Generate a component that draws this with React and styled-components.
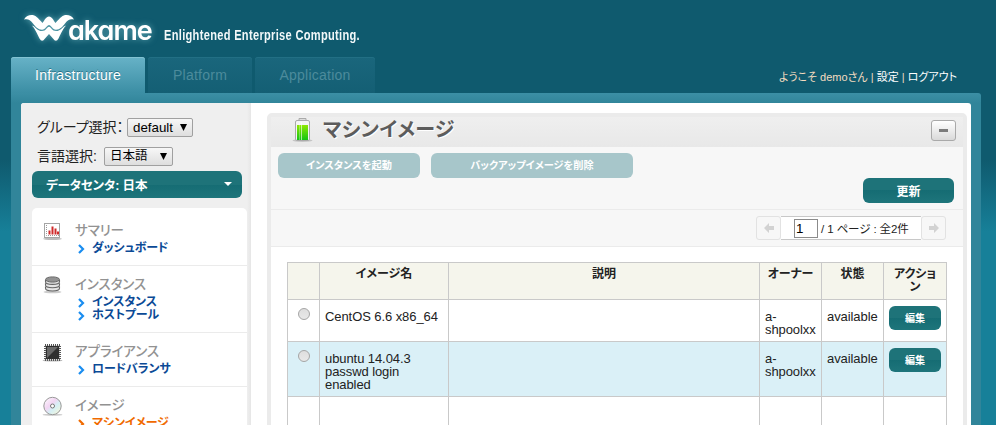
import React from 'react';
import styled, { createGlobalStyle, css } from 'styled-components';

const GlobalStyle = createGlobalStyle`
  * { box-sizing: border-box; }
  html, body { margin: 0; height: 425px; overflow: hidden; }
  body {
    font-family: "Liberation Sans", "Noto Sans CJK JP", sans-serif;
    font-feature-settings: "palt";
    font-size: 13px;
    color: #222;
    background: linear-gradient(#0f5a6e 0, #0f5a6e 160px, #178099 232px, #178099 100%);
  }
`;

const Page = styled.div`
  width: 996px;
  height: 425px;
  overflow: hidden;
  padding: 0 15px 0 11px;
`;

const Header = styled.header`
  height: 57px;
  display: flex;
  padding: 12px 0 0 12px;
`;

const Logo = styled.div`
  display: flex;
  width: 141px;
  color: #fff;
  filter: drop-shadow(0 0 3px rgba(160, 225, 235, 0.55));
`;

const LogoMark = styled.svg`
  width: 52px;
  height: 32px;
  margin-right: -7px;
  flex: none;
`;

const LogoText = styled.span`
  font: 600 27px/32px Inter, sans-serif;
  font-feature-settings: "cv11";
  letter-spacing: -1px;
  padding-top: 3px;
`;

const Tagline = styled.span`
  font-size: 14px;
  font-weight: bold;
  line-height: 16px;
  padding-top: 15px;
  color: #f2f8f9;
  white-space: nowrap;
  letter-spacing: 0.4px;
  transform: scaleX(0.79);
  transform-origin: 0 0;
`;

const NavBar = styled.nav`
  height: 36px;
  display: flex;
  gap: 3px;
`;

const Tab = styled.div`
  width: ${p => p.$width}px;
  border-radius: 3px 3px 0 0;
  font-size: 14px;
  letter-spacing: 0.25px;
  line-height: 37px;
  text-align: center;
  ${p => p.$active ? css`
    color: #fff;
    background: linear-gradient(#67b2c7, #3b8ea4);
    box-shadow: inset 0 1px #82c2d2;
    text-shadow: 0 -1px rgba(10, 80, 100, 0.6);
  ` : css`
    color: #4c8b9c;
    background: linear-gradient(#1a667c, #145f74);
    box-shadow: inset 0 1px #226f84;
  `}
`;

const Session = styled.div`
  margin: 12px 24px 0 auto;
  line-height: 16px;
  font-size: 11px;
  color: #f3dcc0;
  white-space: nowrap;
`;

const SessionLink = styled.a`
  color: #fff;
`;

const Shell = styled.main`
  height: 332px;
  padding: 10px 10px 0;
  border-radius: 0 3px 0 0;
  background: linear-gradient(#3c8fa5 0, #31859a 10px);
`;

const Content = styled.div`
  display: flex;
  height: 322px;
  background: #fff;
  border-radius: 3px 3px 0 0;
  overflow: hidden;
`;

const Sidebar = styled.aside`
  width: 230px;
  flex: none;
  padding: 15px 4px 0 11px;
  background: linear-gradient(90deg, #efefef 226px, #e6e6e6 230px);
`;

const Choice = styled.div`
  display: flex;
  align-items: center;
  height: 19px;
  margin-bottom: ${p => p.$gap}px;
  padding-left: 5px;
  font-size: 14px;
  line-height: 19px;
`;

const ChoiceLabel = styled.span`
  width: ${p => p.$width}px;
  white-space: nowrap;
`;

const Select = styled.span`
  display: flex;
  align-items: center;
  justify-content: space-between;
  width: ${p => p.$width}px;
  height: 19px;
  padding: 0 5px;
  border: 1px solid #a0a0a0;
  border-radius: 2px;
  background: linear-gradient(#f7f7f7, #dedede);
  font-size: ${p => p.$size || 13.33}px;
  color: #000;
  font-feature-settings: normal;
`;

const Arrow = styled.svg`
  width: ${p => p.$width}px;
  height: ${p => p.$height}px;
  fill: ${p => p.$fill || '#000'};
`;

const DataCenter = styled.div`
  display: flex;
  align-items: center;
  justify-content: space-between;
  width: 210px;
  height: 27px;
  margin: 0 0 10px;
  padding: 0 10px 1px 14px;
  border-radius: 6px;
  background: linear-gradient(#1e7379 50%, #156c73 50%, #1e757b);
  color: #fff;
  font-weight: bold;
  font-size: 12.5px;
  letter-spacing: -0.15px;
`;

const Menu = styled.div`
  width: 215px;
  background: #fff;
  border-radius: 5px 5px 0 0;
`;

const Group = styled.section`
  display: grid;
  grid-template-columns: 21px 1fr;
  column-gap: 11px;
  padding: 10px 0 10px 11px;
  border-bottom: 1px solid #ebebeb;
  &:first-child { padding-top: 14px; }
`;

const GroupIcon = styled.svg`
  width: 21px;
  height: 21px;
  margin: -1px 0 0 -1px;
`;

const GroupTitle = styled.h3`
  margin: 0 0 2px;
  height: 18px;
  font-size: 13.5px;
  line-height: 18px;
  font-weight: 500;
  color: #929292;
  letter-spacing: -0.05px;
`;

const MenuLink = styled.a`
  display: flex;
  align-items: center;
  gap: 7px;
  height: 13px;
  padding-left: 3px;
  font-size: 12px;
  font-weight: bold;
  line-height: 13px;
  white-space: nowrap;
  letter-spacing: -0.15px;
  color: ${p => (p.$current ? '#f06a00' : '#0b4a96')};
`;

const Chevron = styled.svg`
  width: 7px;
  height: 10px;
  flex: none;
  fill: none;
  stroke: ${p => (p.$current ? '#f06a00' : '#1a8df0')};
  stroke-width: 2.2;
`;

const Body = styled.div`
  flex: 1;
  padding: 10px 4px 0 16px;
`;

const Panel = styled.section`
  height: 340px;
  border: 4px solid #ebebeb;
  border-radius: 5px;
`;

const PanelHead = styled.div`
  display: flex;
  height: 30px;
  padding: 0 7px 0 20px;
  background: linear-gradient(#efefef, #e8e8e8);
`;

const Battery = styled.svg`
  width: 22px;
  height: 26px;
  margin-right: 10px;
`;

const PanelTitle = styled.h1`
  margin: 0;
  font-size: 20px;
  line-height: 26px;
  color: #5c5c5c;
  text-shadow: 1px 1px #fff;
  letter-spacing: 0.3px;
  flex: 1;
`;

const Collapse = styled.button`
  display: flex;
  align-items: center;
  justify-content: center;
  width: 25px;
  height: 21px;
  margin-top: 3px;
  padding: 0;
  border: 1px solid #a9a9a9;
  border-radius: 3px;
  background: linear-gradient(#fff, #d9d9d9);
  &::before { content: ""; width: 9px; height: 3px; background: #7b7b7b; }
`;

const Actions = styled.div`
  height: 63px;
  padding: 6px 9px 0 7px;
  background: #f7f7f7;
  border-bottom: 1px solid #ebebeb;
`;

const ActionRow = styled.div`
  display: flex;
  gap: 11px;
  justify-content: ${p => (p.$end ? 'flex-end' : 'flex-start')};
`;

const Button = styled.button`
  width: ${p => p.$width}px;
  height: ${p => p.$height || 25}px;
  padding: 0 0 ${p => p.$lift || 0}px;
  border: 0;
  border-radius: 6px;
  font: bold ${p => p.$size || 10.2}px/1 "Noto Sans CJK JP", sans-serif;
  font-feature-settings: "palt";
  color: #fff;
  background: ${p => (p.$muted ? '#a7c6ca' : 'linear-gradient(#1e7379 48%, #156c73 48%, #1e757b)')};
`;

const Pager = styled.div`
  display: flex;
  justify-content: flex-end;
  height: 37px;
  padding: 6px 17px 0 0;
  background: #f7f7f7;
  border-bottom: 1px solid #ebebeb;
`;

const PagerStep = styled.span`
  display: flex;
  align-items: center;
  justify-content: center;
  width: 25px;
  height: 24px;
  border: 1px solid #e2e2e2;
  border-radius: 3px;
  svg { width: 10px; height: 10px; fill: #d2d2d2; }
`;

const PagerInfo = styled.span`
  display: flex;
  align-items: center;
  width: 140px;
  height: 24px;
  padding: 0 0 1px 13px;
  background: #fff;
  border: solid #c8c8c8;
  border-width: 1px 0;
  font-size: 11.5px;
  white-space: nowrap;
  letter-spacing: -0.1px;
`;

const PageInput = styled.span`
  width: 24px;
  height: 19px;
  margin: 1px 3px 0 0;
  padding-left: 1px;
  border: 1px solid #8b8b8b;
  font-size: 13.33px;
  line-height: 18px;
  color: #000;
`;

const Table = styled.table`
  width: 660px;
  margin: 15px 0 0 16px;
  table-layout: fixed;
  border-collapse: separate;
  border-spacing: 0;
  border: solid #c9c9c9;
  border-width: 1px 0 0 1px;
  line-height: 13px;
`;

const Row = styled.tr`
  height: ${p => p.$height}px;
  background: ${p => p.$bg || '#fff'};
`;

const Cell = styled.td`
  padding: ${p => p.$pad || '10px 3px 0 5px'};
  border: solid #c9c9c9;
  border-width: 0 1px 1px 0;
  vertical-align: top;
  line-height: 13px;
  letter-spacing: -0.08px;
`;

const HeadCell = styled.th`
  padding: 5px 6px 0;
  border: solid #c9c9c9;
  border-width: 0 1px 1px 0;
  vertical-align: top;
  font-size: 12px;
  line-height: 13px;
  color: #222;
`;

const Radio = styled.span`
  display: block;
  width: 12px;
  height: 12px;
  border: 1px solid #a5a5a5;
  border-radius: 50%;
  background: linear-gradient(#dedede, #e8e8e8);
`;

const ChartIcon = () => (
  <GroupIcon viewBox="0 0 21 21">
    <ellipse cx="10.5" cy="17.8" rx="9.5" ry="1.2" fill="#bbb" />
    <rect x="2.500" y="2.500" width="15" height="14" fill="#fff" stroke="#a5a5a5" />
    <path d="M4.500 4v10.500H17" fill="none" stroke="#999" strokeDasharray="1 1" />
    <path d="M7.500 13.500v-4M10.500 13.500v-8M13.500 13.500v-6M16 13.500v-3" stroke="#cf2a2a" strokeWidth="2" />
  </GroupIcon>
);

const DiskIcon = () => (
  <GroupIcon viewBox="0 0 21 21">
    <ellipse cx="10.5" cy="17" rx="9" ry="1.300" fill="#ccc" />
    {[13.5, 10.2, 6.9].map(y => (
      <path key={y} d={`M3.500 ${y - 2}v1.800c0 3.600 14 3.600 14 0v-1.800`} fill="#e5e5e5" stroke="#666" strokeWidth="1.100" />
    ))}
    <ellipse cx="10.5" cy="4.500" rx="7" ry="2.600" fill="#929292" stroke="#666" />
  </GroupIcon>
);

const ChipIcon = () => (
  <GroupIcon viewBox="0 0 21 21">
    <ellipse cx="10.500" cy="18.500" rx="10" ry="1" fill="#bbb" />
    <rect x="3" y="3" width="15" height="15" fill="#ddd" stroke="#555" strokeWidth="2" strokeDasharray="1 1" />
    <rect x="4" y="4" width="13" height="13" fill="#2f2f2f" />
    <path d="M5 5h11L5 16z" fill="#686868" />
  </GroupIcon>
);

const DiscIcon = () => (
  <GroupIcon viewBox="0 0 21 21">
    <defs>
      <linearGradient id="disc" x1="0" y1="0" x2="1" y2="1">
        <stop offset="0" stopColor="#fff" />
        <stop offset=".4" stopColor="#f2d5f3" />
        <stop offset=".6" stopColor="#d5f0f5" />
        <stop offset="1" stopColor="#fdf6d4" />
      </linearGradient>
    </defs>
    <ellipse cx="10.5" cy="18.800" rx="10" ry="1" fill="#ccc" />
    <circle cx="10.5" cy="10" r="8.700" fill="url(#disc)" stroke="#999" />
    <circle cx="10.5" cy="10" r="2" fill="#fff" stroke="#777" />
  </GroupIcon>
);

const GROUPS = [
  { title: 'サマリー', icon: ChartIcon, links: ['ダッシュボード'] },
  { title: 'インスタンス', icon: DiskIcon, links: ['インスタンス', 'ホストプール'] },
  { title: 'アプライアンス', icon: ChipIcon, links: ['ロードバランサ'] },
  { title: 'イメージ', icon: DiscIcon, links: ['マシンイメージ'], current: true },
];

const IMAGES = [
  { name: 'CentOS 6.6 x86_64', height: 42 },
  { name: 'ubuntu 14.04.3 passwd login enabled', height: 55, bg: '#daf0f7' },
];

const DownArrow = props => (
  <Arrow viewBox="0 0 8 6" preserveAspectRatio="none" {...props}><path d="M0 0h8L4 6z" /></Arrow>
);

export default function App() {
  return (
    <Page>
      <GlobalStyle />
      <Header>
        <Logo>
          <LogoMark viewBox="0 0 52 32" fill="#fff">
            <path d="M1 7.500C3 4 5.500 3 8.500 3c4 0 6 2.500 11 8 2-2.500 3.500-6.500 6.500-6.500s4.500 4 6.500 6.500c5-5.500 7-8 11-8 3 0 5.500 1 7.500 4.500-4-.8-6 .2-9 4-2.500 3.300-5 6.200-9 6.200-3.500 0-5-4.700-7-4.700s-3.500 4.700-7 4.700c-4 0-6.500-2.900-9-6.200C7 7.700 5 6.700 1 7.500z" />
            <path d="M9 13.500c3 .5 5 5.600 10 5.600 4 0 5-4.300 7-4.300s3 4.300 7 4.300c5 0 7-5.100 10-5.600-2 2-5 7.500-7.500 13q-2.500 4.500-5.500 0L26 22l-4 4.500q-3 4.500-5.500 0C14 21 11 15.500 9 13.500z" />
          </LogoMark>
          <LogoText>akame</LogoText>
        </Logo>
        <Tagline>Enlightened Enterprise Computing.</Tagline>
      </Header>
      <NavBar>
        <Tab $width={134} $active>Infrastructure</Tab>
        <Tab $width={104}>Platform</Tab>
        <Tab $width={120}>Application</Tab>
        <Session>
          ようこそ demoさん | <SessionLink>設定</SessionLink> | <SessionLink>ログアウト</SessionLink>
        </Session>
      </NavBar>
      <Shell>
        <Content>
          <Sidebar>
            <Choice $gap={10}>
              <ChoiceLabel $width={90}>グループ選択：</ChoiceLabel>
              <Select $width={66}>default<DownArrow $width={7} $height={7} /></Select>
            </Choice>
            <Choice $gap={5}>
              <ChoiceLabel $width={67}>言語選択:</ChoiceLabel>
              <Select $width={69} $size={12.5}>日本語<DownArrow $width={7} $height={7} /></Select>
            </Choice>
            <DataCenter>データセンタ: 日本<DownArrow $width={8} $height={4} $fill="#fff" /></DataCenter>
            <Menu>
              {GROUPS.map(({ title, icon: Icon, links, current }) => (
                <Group key={title}>
                  <Icon />
                  <div>
                    <GroupTitle>{title}</GroupTitle>
                    {links.map(text => (
                      <MenuLink key={text} $current={current}>
                        <Chevron viewBox="0 0 7 10" $current={current}><path d="M1 1l4 4-4 4" /></Chevron>
                        {text}
                      </MenuLink>
                    ))}
                  </div>
                </Group>
              ))}
            </Menu>
          </Sidebar>
          <Body>
            <Panel>
              <PanelHead>
                <Battery viewBox="0 0 22 26">
                  <defs>
                    <linearGradient id="charge" x1="0" y1="0" x2="0" y2="1">
                      <stop offset="0" stopColor="#8ee800" />
                      <stop offset="1" stopColor="#14c414" />
                    </linearGradient>
                  </defs>
                  <ellipse cx="11.500" cy="23.500" rx="10" ry="1.500" fill="#c4c4c4" />
                  <path d="M8 3V1.500h7V3" fill="#ddd" stroke="#aaa" />
                  <rect x="4.500" y="3.500" width="14" height="20" rx="1.500" fill="#f4f4f4" stroke="#aaa" />
                  <rect x="6" y="8" width="11" height="15" fill="url(#charge)" />
                  <path d="M8.500 5v18" stroke="#fff" opacity=".3" />
                  <path d="M10.500 5v18" stroke="#fff" opacity=".6" />
                </Battery>
                <PanelTitle>マシンイメージ</PanelTitle>
                <Collapse />
              </PanelHead>
              <Actions>
                <ActionRow>
                  <Button $width={142} $muted $lift={1}>インスタンスを起動</Button>
                  <Button $width={202} $muted $lift={1}>バックアップイメージを削除</Button>
                </ActionRow>
                <ActionRow $end>
                  <Button $width={91} $size={12}>更新</Button>
                </ActionRow>
              </Actions>
              <Pager>
                <PagerStep><svg viewBox="0 0 10 10"><path d="M0 5l5-5v3h5v4H5v3z" /></svg></PagerStep>
                <PagerInfo><PageInput>1</PageInput>/ 1 ページ : 全2件</PagerInfo>
                <PagerStep><svg viewBox="0 0 10 10"><path d="M10 5L5 0v3H0v4h5v3z" /></svg></PagerStep>
              </Pager>
              <Table>
                <colgroup>
                  <col width="32" /><col width="129" /><col width="311" />
                  <col width="62" /><col width="62" /><col width="63" />
                </colgroup>
                <thead>
                  <Row $height={37} $bg="#f5f5ec">
                    <HeadCell />
                    <HeadCell>イメージ名</HeadCell>
                    <HeadCell>説明</HeadCell>
                    <HeadCell>オーナー</HeadCell>
                    <HeadCell>状態</HeadCell>
                    <HeadCell>アクション</HeadCell>
                  </Row>
                </thead>
                <tbody>
                  {IMAGES.map(image => (
                    <Row key={image.name} $height={image.height} $bg={image.bg}>
                      <Cell $pad="8px 0 0 10px"><Radio /></Cell>
                      <Cell $pad="10px 5px 0">{image.name}</Cell>
                      <Cell />
                      <Cell>a-<br />shpoolxx</Cell>
                      <Cell>available</Cell>
                      <Cell $pad="6px 5px 0"><Button $width={52} $height={24} $size={10} $lift={1}>編集</Button></Cell>
                    </Row>
                  ))}
                  <Row $height={55}>
                    <Cell /><Cell /><Cell /><Cell /><Cell /><Cell />
                  </Row>
                </tbody>
              </Table>
            </Panel>
          </Body>
        </Content>
      </Shell>
    </Page>
  );
}
